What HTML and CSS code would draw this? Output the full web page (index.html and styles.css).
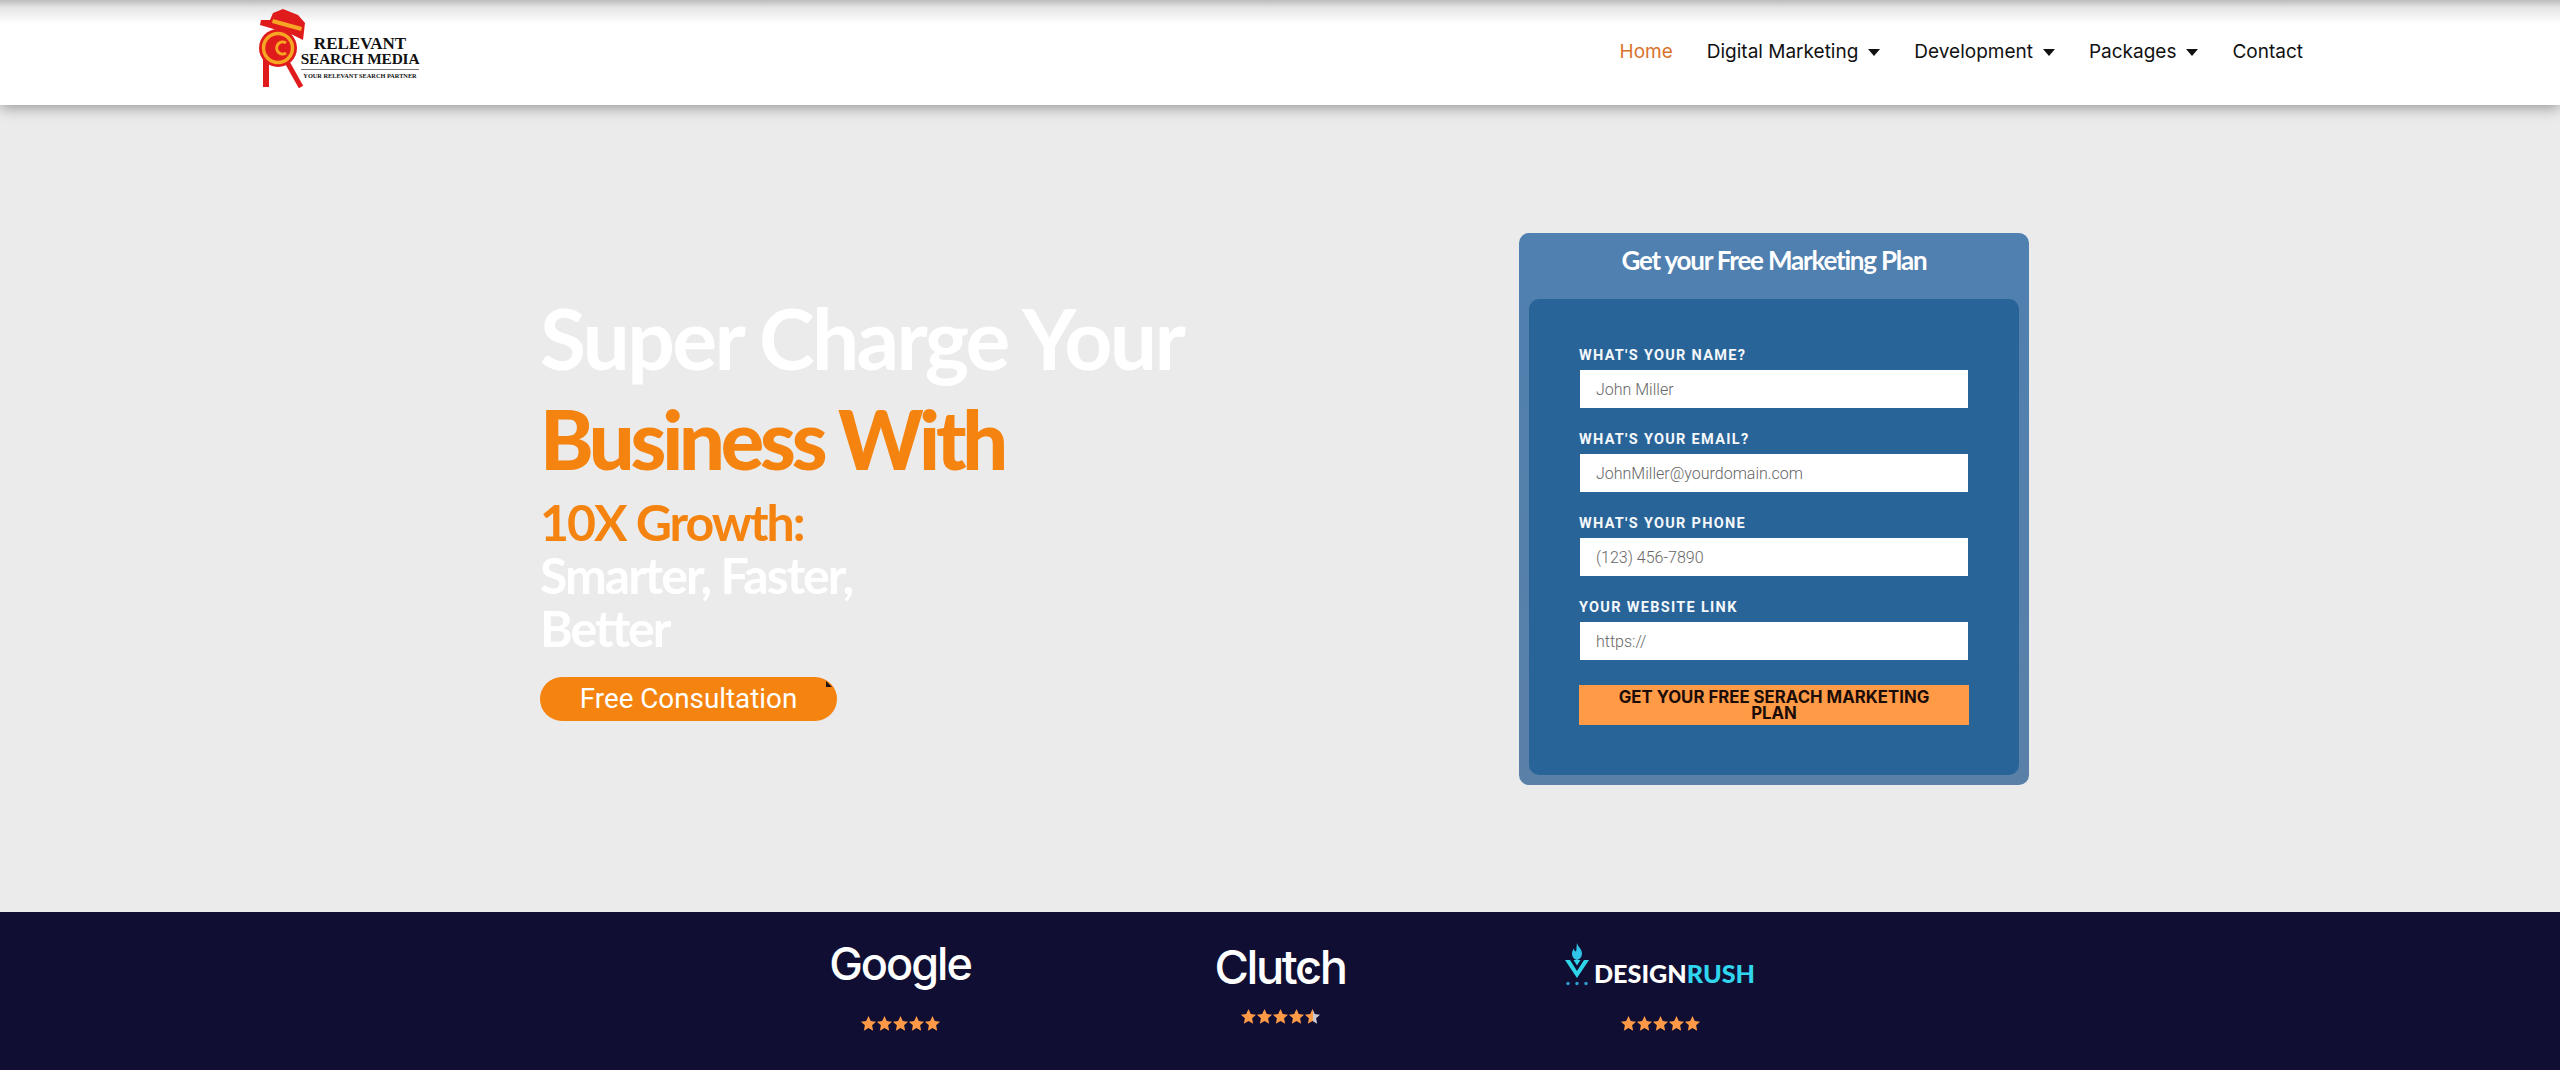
FILE: index.html
```html
<!DOCTYPE html>
<html lang="en">
<head>
    <meta charset="UTF-8">
    <title>Relevant Search Media</title>
    <link rel="stylesheet" href="styles.css">
</head>
<body>
    <svg class="defs" width="0" height="0">
        <defs>
            <linearGradient id="star-half">
                <stop offset="52%" stop-color="#ff9a47"/>
                <stop offset="52%" stop-color="#c9c9d2"/>
            </linearGradient>
            <symbol id="star" viewBox="0 0 24 24">
                <path d="M12 2l3 6.6 7 .9-5.2 4.9 1.4 7.1-6.2-3.6-6.2 3.6 1.4-7.1L1.900 9.500l7-.9z"/>
            </symbol>
        </defs>
    </svg>

    <header class="site-header">
        <a class="logo" href="#">
            <svg class="logo-mark" width="50" height="90" viewBox="0 0 50 90">
                <path d="M5 58h6v29H5z" fill="#e01b1b"/>
                <path d="M29 62l14 25" stroke="#e01b1b" stroke-width="5" fill="none"/>
                <path d="M15 13l10-4 15 6 7 8-2 17-10-5-16-5-17-5 1-5 9 0z" fill="#e01b1b"/>
                <path d="M15 19l29 8-1 4-29-8z" fill="#f6a623"/>
                <circle cx="20" cy="48" r="19" fill="#e01b1b"/>
                <circle cx="20" cy="48" r="14.500" fill="none" stroke="#f6a623" stroke-width="3.500"/>
                <path d="M28 43a6 6 0 1 0 0 10" fill="none" stroke="#f6a623" stroke-width="3"/>
            </svg>
            <div class="logo-text">
                <span class="logo-line1">RELEVANT</span>
                <span class="logo-line2">SEARCH MEDIA</span>
                <span class="logo-line3">YOUR RELEVANT SEARCH PARTNER</span>
            </div>
        </a>
        <nav class="main-nav">
            <a class="active" href="#">Home</a>
            <a class="has-sub" href="#">Digital Marketing</a>
            <a class="has-sub" href="#">Development</a>
            <a class="has-sub" href="#">Packages</a>
            <a href="#">Contact</a>
        </nav>
    </header>

    <section class="hero">
        <div class="hero-copy">
            <h1>
                <span class="line-white line-super">Super Charge Your</span>
                <span class="line-orange line-business">Business With</span>
            </h1>
            <h2>
                <span class="line-orange">10X Growth:</span>
                <span class="line-white">Smarter, Faster,</span>
                <span class="line-white">Better</span>
            </h2>
            <a class="cta" href="#">Free Consultation</a>
        </div>

        <div class="plan-card">
            <h3>Get your Free Marketing Plan</h3>
            <form class="plan-form">
                <label for="name">What's your name?</label>
                <input type="text" id="name" placeholder="John Miller">

                <label for="email">What's your email?</label>
                <input type="email" id="email" placeholder="JohnMiller@yourdomain.com">

                <label for="phone">What's your phone</label>
                <input type="text" id="phone" placeholder="(123) 456-7890">

                <label for="site">Your website link</label>
                <input type="text" id="site" placeholder="https://">

                <button type="button">Get your free serach marketing plan</button>
            </form>
        </div>
    </section>

    <section class="reviews">
        <div class="review">
            <div class="brand brand-google">Google</div>
            <div class="stars">
                <svg><use href="#star"/></svg><svg><use href="#star"/></svg><svg><use href="#star"/></svg><svg><use href="#star"/></svg><svg><use href="#star"/></svg>
            </div>
        </div>
        <div class="review">
            <div class="brand brand-clutch">Clut<span class="clutch-c">c</span>h</div>
            <div class="stars">
                <svg><use href="#star"/></svg><svg><use href="#star"/></svg><svg><use href="#star"/></svg><svg><use href="#star"/></svg><svg fill="url(#star-half)"><use href="#star"/></svg>
            </div>
        </div>
        <div class="review">
            <div class="brand brand-rush">
                <svg class="rush-mark" width="24" height="43" viewBox="0 0 24 43">
                    <path d="M12 0c1 4 5 6 5 10.500 0 3.500-2.500 6-5 6.500-2.500-.5-5-3-5-6.500 0-2 1-4 2-5 0 2 1 3 2 3 .8-2 .3-5 1-8.500z" fill="#2fc4e8"/>
                    <path d="M0 17h5l7 11 7-11h5L12 35z" fill="#2fd6ea"/>
                    <path d="M8.500 17h7L12 22.500z" fill="#2fd6ea"/>
                    <circle cx="3" cy="40.500" r="1.700" fill="#2f9fd0"/>
                    <circle cx="12" cy="40.500" r="1.700" fill="#2f9fd0"/>
                    <circle cx="21" cy="40.500" r="1.700" fill="#2f9fd0"/>
                </svg>
                <span>DESIGN<em>RUSH</em></span>
            </div>
            <div class="stars">
                <svg><use href="#star"/></svg><svg><use href="#star"/></svg><svg><use href="#star"/></svg><svg><use href="#star"/></svg><svg><use href="#star"/></svg>
            </div>
        </div>
    </section>
</body>
</html>
```

FILE: styles.css
```css
* {
    box-sizing: border-box;
}
body {
    margin: 0;
    font-family: 'Roboto', sans-serif;
    background: #ebebeb;
    overflow: hidden;
}
a {
    text-decoration: none;
    color: inherit;
}
.defs {
    display: block;
    height: 0;
}

/* header */
.site-header {
    position: relative;
    z-index: 2;
    height: 105px;
    padding: 0 257px 0 258px;
    display: flex;
    justify-content: space-between;
    align-items: flex-start;
    background: linear-gradient(#bdbdbd 0, #e6e6e6 8px, #fff 24px);
    box-shadow: 0 2px 14px rgba(0, 0, 0, 0.4);
}
.logo {
    display: flex;
    align-items: flex-start;
    color: #111;
}
.logo-mark {
    flex: none;
}
.logo-text {
    width: 114px;
    margin: 36px 0 0 -5px;
    display: flex;
    flex-direction: column;
    align-items: center;
    font-family: 'Liberation Serif', serif;
    font-weight: bold;
    white-space: nowrap;
}
.logo-line1 {
    font-size: 17px;
    line-height: 15px;
}
.logo-line2 {
    font-size: 15.4px;
    line-height: 15px;
    letter-spacing: -0.2px;
    padding-bottom: 3px;
    border-bottom: 1px solid #777;
}
.logo-line3 {
    font-size: 6.3px;
    line-height: 10px;
    margin-top: 1px;
}
.main-nav {
    display: flex;
    gap: 34px;
    margin-top: 40px;
    font-family: 'Inter', sans-serif;
    font-size: 19px;
    line-height: 24px;
    color: #111;
}
.main-nav .active {
    color: #d9722c;
}
.has-sub::after {
    content: "";
    display: inline-block;
    margin-left: 10px;
    vertical-align: 2px;
    border-top: 7px solid #111;
    border-left: 6px solid transparent;
    border-right: 6px solid transparent;
}

/* hero */
.hero {
    height: 807px;
    padding: 128px 0 0 540px;
    display: flex;
    align-items: flex-start;
}
.hero-copy {
    width: 979px;
    padding-top: 55px;
}
.hero-copy h1,
.hero-copy h2 {
    margin: 0;
    font-family: 'Lato', sans-serif;
    font-weight: 700;
}
.hero-copy h1 {
    line-height: 99px;
}
.line-super {
    font-size: 84px;
    letter-spacing: -2.7px;
}
.line-business {
    margin-top: 2px;
    font-size: 81px;
    font-weight: 900;
    letter-spacing: -4.2px;
}
.hero-copy h2 {
    font-size: 50px;
    line-height: 53px;
    letter-spacing: -2px;
    margin-top: 8px;
}
.hero-copy span {
    display: block;
}
.line-white {
    color: #fff;
}
.line-orange {
    color: #f5830f;
}
.cta {
    position: relative;
    display: block;
    width: 297px;
    height: 44px;
    margin-top: 22px;
    border-radius: 22px;
    background: #f5830f;
    color: #fff;
    font-size: 27.8px;
    line-height: 44px;
    text-align: center;
}
.cta::after {
    content: "";
    position: absolute;
    top: 4px;
    right: 5px;
    border-top: 6px solid transparent;
    border-left: 6px solid #1d1410;
}

/* form card */
.plan-card {
    width: 510px;
    height: 552px;
    padding: 0 10px 10px;
    border-radius: 10px;
    background: linear-gradient(#4f80b0, #5a80a8);
}
.plan-card h3 {
    margin: 0;
    height: 66px;
    font-family: 'Lato', sans-serif;
    font-weight: 700;
    font-size: 26px;
    line-height: 54px;
    letter-spacing: -1.2px;
    text-align: center;
    color: #fff;
}
.plan-form {
    height: 476px;
    padding: 48px 50px 50px;
    border-radius: 10px;
    background: #296498;
}
.plan-form label {
    display: block;
    height: 17px;
    margin-bottom: 6px;
    font-size: 14.5px;
    line-height: 17px;
    font-weight: 700;
    letter-spacing: 1.3px;
    text-transform: uppercase;
    color: #f4f8fb;
}
.plan-form input {
    display: block;
    width: 388px;
    height: 38px;
    margin: 0 1px 23px;
    padding: 0 16px;
    border: none;
    background: #fff;
    font-family: 'Roboto', sans-serif;
    font-size: 16px;
    font-weight: 300;
}
.plan-form input::placeholder {
    color: #666;
    opacity: 1;
}
.plan-form button {
    display: block;
    width: 390px;
    height: 40px;
    margin-top: 25px;
    padding: 0 30px;
    border: none;
    background: #ff9a47;
    color: #1b0c08;
    font-family: 'Inter', sans-serif;
    font-size: 16.8px;
    font-weight: 700;
    line-height: 16px;
    text-transform: uppercase;
}

/* review strip */
.reviews {
    height: 158px;
    display: grid;
    grid-template-columns: repeat(3, 380px);
    justify-content: center;
    background: #100f33;
}
.review {
    display: flex;
    flex-direction: column;
    align-items: center;
}
.brand {
    color: #fff;
    white-space: nowrap;
}
.brand-google {
    font-family: 'Inter', sans-serif;
    font-weight: 500;
    font-size: 45px;
    line-height: 50px;
    letter-spacing: -2px;
    height: 77px;
    margin-top: 27px;
}
.brand-clutch {
    font-family: 'Inter', sans-serif;
    font-weight: 500;
    font-size: 47px;
    line-height: 52px;
    letter-spacing: -2.4px;
    height: 68px;
    margin-top: 29px;
}
.clutch-c {
    position: relative;
}
.clutch-c::after {
    content: "";
    position: absolute;
    left: 10px;
    top: 29px;
    width: 7px;
    height: 7px;
    border-radius: 50%;
    background: #fff;
}
.brand-rush {
    display: flex;
    align-items: flex-start;
    gap: 5px;
    height: 73px;
    margin-top: 31px;
    font-family: 'Lato', sans-serif;
    font-weight: 900;
    font-size: 25.2px;
    line-height: 26px;
}
.brand-rush span {
    margin-top: 17px;
}
.brand-rush em {
    font-style: normal;
    color: #30d5ee;
}
.stars {
    display: flex;
    gap: 1px;
    height: 15px;
    fill: #ff9a47;
}
.stars svg {
    width: 15px;
    height: 15px;
    overflow: visible;
    transform: scale(1.2);
}
```
